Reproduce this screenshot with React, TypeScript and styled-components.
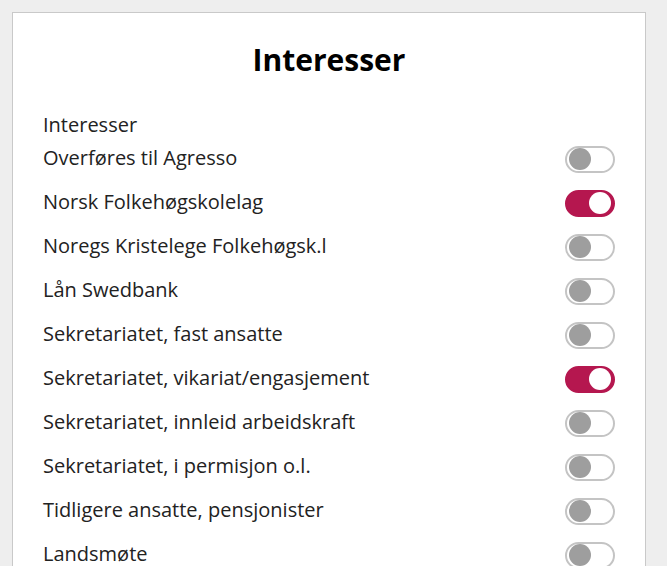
import { useState } from 'react';
import styled, { createGlobalStyle } from 'styled-components';

const GlobalStyle = createGlobalStyle`
  body {
    margin: 0;
    background: #eeeeee;
    font-family: 'Open Sans', 'Noto Sans', sans-serif;
    color: #222;
  }
`;

const initial = [
  { name: 'Overføres til Agresso', on: false },
  { name: 'Norsk Folkehøgskolelag', on: true },
  { name: 'Noregs Kristelege Folkehøgsk.l', on: false },
  { name: 'Lån Swedbank', on: false },
  { name: 'Sekretariatet, fast ansatte', on: false },
  { name: 'Sekretariatet, vikariat/engasjement', on: true },
  { name: 'Sekretariatet, innleid arbeidskraft', on: false },
  { name: 'Sekretariatet, i permisjon o.l.', on: false },
  { name: 'Tidligere ansatte, pensjonister', on: false },
  { name: 'Landsmøte', on: false },
];

const App = () => {
  const [items, setItems] = useState(initial);

  const onToggle = (idx: number) => {
    setItems(items.map((it, i) => (i === idx ? { ...it, on: !it.on } : it)));
  };

  return (
    <>
      <GlobalStyle />
      <Page>
        <Card>
          <Title>Interesser</Title>
          <SectionLabel>Interesser</SectionLabel>
          {items.map((it, i) => (
            <Row key={it.name}>
              <RowText>{it.name}</RowText>
              <Switch on={it.on} onClick={() => onToggle(i)}>
                <Knob on={it.on} />
              </Switch>
            </Row>
          ))}
        </Card>
      </Page>
    </>
  );
};

export default App;

const Page = styled.div`
  padding: 12px 21px 0 12px;
  height: 566px;
  box-sizing: border-box;
  overflow: hidden;
`;
const Card = styled.div`
  background: #fff;
  border: 1px solid #c9c9c9;
  border-bottom: none;
  padding: 29px 30px 40px 30px;
`;
const Title = styled.h1`
  margin: 0 0 35px 0;
  font-size: 30px;
  line-height: 36px;
  font-weight: 700;
  text-align: center;
  color: #000;
`;
const SectionLabel = styled.div`
  font-size: 20px;
  line-height: 24px;
`;
const Row = styled.div`
  display: flex;
  align-items: center;
  justify-content: space-between;
  height: 44px;
`;
const RowText = styled.span`
  font-size: 20px;
  line-height: 24px;
  margin-top: -3px;
`;
const Switch = styled.button<{ on: boolean }>`
  width: 50px;
  height: 27px;
  padding: 0 2px;
  box-sizing: border-box;
  border-radius: 14px;
  border: 2px solid ${(p) => (p.on ? '#b5174f' : '#c4c4c4')};
  background: ${(p) => (p.on ? '#b5174f' : '#fff')};
  display: flex;
  align-items: center;
  justify-content: ${(p) => (p.on ? 'flex-end' : 'flex-start')};
  cursor: pointer;
`;
const Knob = styled.span<{ on: boolean }>`
  width: 22px;
  height: 22px;
  border-radius: 50%;
  background: ${(p) => (p.on ? '#fff' : '#9e9e9e')};
`;
